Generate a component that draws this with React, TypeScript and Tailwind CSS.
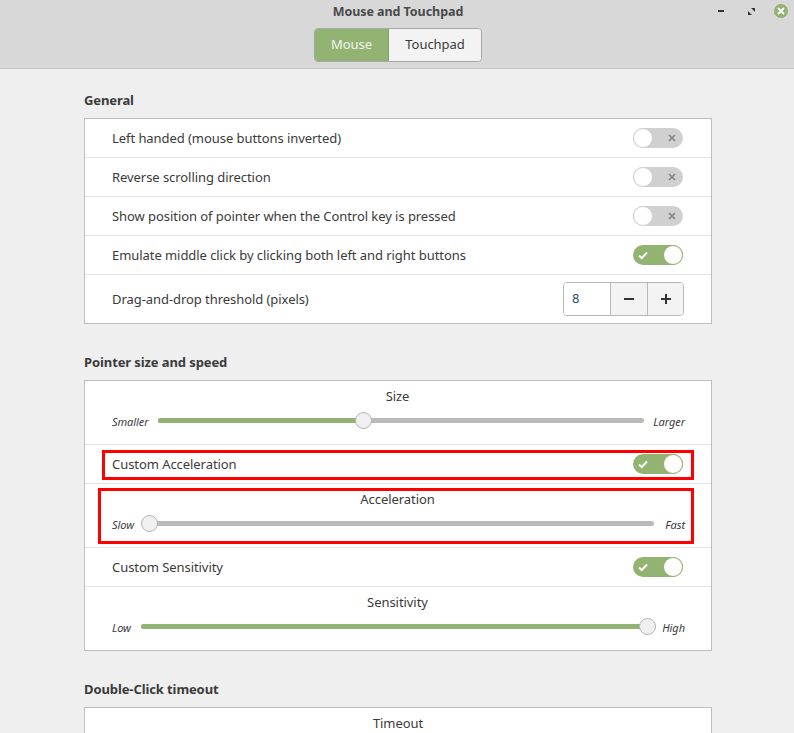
import type { ReactNode } from "react";

const font = { fontFamily: '"Noto Sans", sans-serif' };

function Toggle({ on }: { on?: boolean }) {
  if (on) {
    return (
      <div className="relative w-[50px] h-5 rounded-full bg-[#92b372] shrink-0">
        <svg className="absolute left-[5px] top-[5px] w-[10px] h-[10px]" viewBox="0 0 10 10" fill="none" stroke="#fff" strokeWidth="2">
          <path d="M1 5.5 L3.8 8 L9 2.5" />
        </svg>
        <div className="absolute right-0 top-0 w-5 h-5 rounded-full bg-white border border-[#92b372]" />
      </div>
    );
  }
  return (
    <div className="relative w-[50px] h-5 rounded-full bg-[#d0d0d0] shrink-0">
      <svg className="absolute right-[7px] top-[6px] w-2 h-2" viewBox="0 0 8 8" fill="none" stroke="#85857a" strokeWidth="1.6">
        <path d="M1 1 L7 7 M7 1 L1 7" />
      </svg>
      <div className="absolute left-0 top-0 w-5 h-5 rounded-full bg-white border border-[#cfcfcf]" />
    </div>
  );
}

function Row({ label, children }: { label: string; children?: ReactNode }) {
  return (
    <div className="h-[39px] flex items-center justify-between pl-[27px] pr-[28px] border-b border-[#e4e4e4]">
      <span className="pt-[2px]">{label}</span>
      {children}
    </div>
  );
}

function Slider({ title, left, right, pct, trackLeft, trackRight, tall, last }: { title: string; left: string; right: string; pct: number; trackLeft: number; trackRight: number; tall: number; last?: boolean }) {
  return (
    <div className={last ? "pl-[27px] pr-[26px] flex flex-col" : "pl-[27px] pr-[26px] border-b border-[#e4e4e4] flex flex-col"} style={{ height: tall }}>
      <div className="text-center pt-[5px] pr-[2px] leading-[20px]">{title}</div>
      <div className="relative h-5 mt-[5px]">
        <span className="absolute left-0 top-[3px] text-[11px] italic leading-[16px]">{left}</span>
        <span className="absolute right-0 top-[3px] text-[11px] italic leading-[16px]">{right}</span>
        <div className="absolute top-[7px] h-[5px] rounded-full bg-[#bababa]" style={{ left: trackLeft, right: trackRight }}>
          <div className="h-full rounded-full bg-[#92b372]" style={{ width: `${pct}%` }} />
          <div className="absolute top-[-6px] w-[17px] h-[17px] rounded-full bg-[#f0f0f0] border border-[#b4b4b4] -ml-[9px]" style={{ left: `${pct}%` }} />
        </div>
      </div>
    </div>
  );
}

function Heading({ children }: { children: ReactNode }) {
  return <h2 className="font-bold leading-[18px] tracking-[-0.1px] text-[#3b3b3b]">{children}</h2>;
}

export default function App() {
  return (
    <div className="w-[794px] h-[733px] overflow-hidden bg-[#efefef] text-[13px] tracking-[-0.06px] text-[#3a3a3a]" style={font}>
      {/* title bar */}
      <div className="relative h-[69px] pl-[2px] bg-[#d8d8d8] border-b border-[#c4c4c4] flex flex-col items-center">
        <div className="font-bold text-[12.5px] leading-[16px] mt-1 text-[#4a4a4a]">Mouse and Touchpad</div>
        <div className="flex mt-2 h-[34px] rounded-[4px] overflow-hidden border border-[#a8a8a8]">
          <div className="w-[74px] flex items-center justify-center bg-[#92b372] text-[#f2f6ee] border-r border-[#88a06c]">Mouse</div>
          <div className="w-[92px] flex items-center justify-center bg-[#f3f3f3]">Touchpad</div>
        </div>
        <div className="absolute left-[718px] top-[10px] w-[6px] h-[2px] bg-[#333]" />
        <svg className="absolute left-[748px] top-[8px] w-[7px] h-[7px]" viewBox="0 0 8 8" fill="#333">
          <path d="M3.5 0 H8 V4.5 Z M0 3.5 V8 H4.5 Z" />
        </svg>
        <div className="absolute left-[774px] top-[4px] w-[14px] h-[14px] rounded-full bg-[#92b372] flex items-center justify-center">
          <svg className="w-2 h-2" viewBox="0 0 8 8" stroke="#fff" strokeWidth="1.8" fill="none">
            <path d="M1 1 L7 7 M7 1 L1 7" />
          </svg>
        </div>
      </div>

      {/* content */}
      <div className="relative pl-[84px] pr-[82px] pt-[22px] w-[794px] box-border">
        <Heading>General</Heading>
        <div className="mt-[9px] bg-white border border-[#bdbdbd]">
          <Row label="Left handed (mouse buttons inverted)"><Toggle /></Row>
          <Row label="Reverse scrolling direction"><Toggle /></Row>
          <Row label="Show position of pointer when the Control key is pressed"><Toggle /></Row>
          <Row label="Emulate middle click by clicking both left and right buttons"><Toggle on /></Row>
          <div className="h-[48px] flex items-center justify-between pl-[27px] pr-[27px]">
            <span className="pt-[2px]">Drag-and-drop threshold (pixels)</span>
            <div className="flex h-[34px] w-[121px] rounded-[4px] border border-[#b8b8b8] overflow-hidden">
              <div className="w-[46px] bg-white flex items-center pl-[8px] text-[#2f4a6b]">8</div>
              <div className="w-[37px] bg-[#f3f3f3] border-l border-[#b8b8b8] flex items-center justify-center">
                <svg className="w-[10px] h-[10px]" viewBox="0 0 10 10" fill="#333"><rect x="0" y="4" width="10" height="2" /></svg>
              </div>
              <div className="flex-1 bg-[#f3f3f3] border-l border-[#b8b8b8] flex items-center justify-center">
                <svg className="w-[10px] h-[10px]" viewBox="0 0 10 10" fill="#333"><path d="M4 0 H6 V4 H10 V6 H6 V10 H4 V6 H0 V4 H4 Z" /></svg>
              </div>
            </div>
          </div>
        </div>

        <div className="mt-[29px]"><Heading>Pointer size and speed</Heading></div>
        <div className="mt-[9px] bg-white border border-[#bdbdbd]">
          <Slider title="Size" left="Smaller" right="Larger" pct={42.3} trackLeft={46} trackRight={41} tall={64} />
          <Row label="Custom Acceleration"><Toggle on /></Row>
          <Slider title="Acceleration" left="Slow" right="Fast" pct={1.6} trackLeft={30} trackRight={31} tall={64} />
          <Row label="Custom Sensitivity"><Toggle on /></Row>
          <Slider title="Sensitivity" left="Low" right="High" pct={98.4} trackLeft={29} trackRight={29} tall={63} last />
        </div>

        <div className="mt-[29px]"><Heading>Double-Click timeout</Heading></div>
        <div className="mt-[9px] bg-white border border-[#bdbdbd] h-[60px]">
          <div className="text-center pt-[5px] leading-[20px]">Timeout</div>
        </div>

        {/* red annotations */}
        <div className="absolute left-[102px] top-[381px] w-[592px] h-[30px] border-[3px] border-[#ff0000]" />
        <div className="absolute left-[98px] top-[419px] w-[596px] h-[56px] border-[3px] border-[#ff0000]" />
      </div>
    </div>
  );
}
